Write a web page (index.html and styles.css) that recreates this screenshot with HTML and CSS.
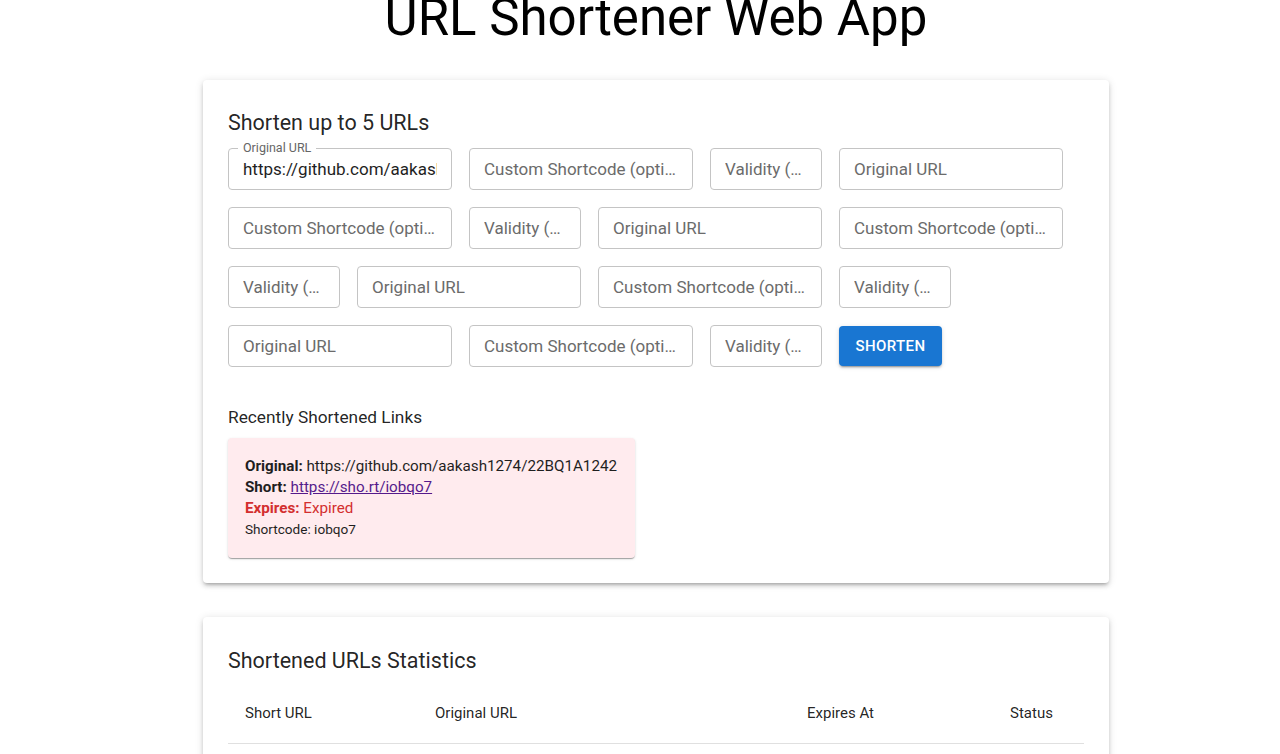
FILE: index.html
```html
<!DOCTYPE html>
<html lang="en">
<head>
<meta charset="utf-8">
<title>URL Shortener Web App</title>
<link rel="stylesheet" href="styles.css">
</head>
<body>
<div class="container">
  <h1 class="title">URL Shortener Web App</h1>

  <section class="paper form-paper">
    <h2 class="section-title">Shorten up to 5 URLs</h2>
    <div class="fields">
      <div class="field wide filled">
        <span class="float-label">Original URL</span>
        <div class="value">https://github.com/aakash1274/22BQ1A1242</div>
      </div>
      <div class="field wide"><span class="ph">Custom Shortcode (optional)</span></div>
      <div class="field narrow"><span class="ph">Validity (minutes)</span></div>
      <div class="field wide"><span class="ph">Original URL</span></div>

      <div class="field wide"><span class="ph">Custom Shortcode (optional)</span></div>
      <div class="field narrow"><span class="ph">Validity (minutes)</span></div>
      <div class="field wide"><span class="ph">Original URL</span></div>
      <div class="field wide"><span class="ph">Custom Shortcode (optional)</span></div>

      <div class="field narrow"><span class="ph">Validity (minutes)</span></div>
      <div class="field wide"><span class="ph">Original URL</span></div>
      <div class="field wide"><span class="ph">Custom Shortcode (optional)</span></div>
      <div class="field narrow"><span class="ph">Validity (minutes)</span></div>

      <div class="field wide"><span class="ph">Original URL</span></div>
      <div class="field wide"><span class="ph">Custom Shortcode (optional)</span></div>
      <div class="field narrow"><span class="ph">Validity (minutes)</span></div>
      <button class="btn" type="button">SHORTEN</button>
    </div>

    <h3 class="sub-title">Recently Shortened Links</h3>
    <div class="link-card">
      <div class="line"><b>Original:</b> https://github.com/aakash1274/22BQ1A1242</div>
      <div class="line"><b>Short:</b> <a class="short-link" href="#">https://sho.rt/iobqo7</a></div>
      <div class="line expired"><b>Expires:</b> Expired</div>
      <div class="line small">Shortcode: iobqo7</div>
    </div>
  </section>

  <section class="paper stats-paper">
    <h2 class="section-title stats-title">Shortened URLs Statistics</h2>
    <table class="stats">
      <thead>
        <tr>
          <th class="c1">Short URL</th>
          <th class="c2">Original URL</th>
          <th class="c3">Expires At</th>
          <th class="c4">Status</th>
        </tr>
      </thead>
    </table>
  </section>
</div>
</body>
</html>
```

FILE: styles.css
```css
* { box-sizing: border-box; }

html, body {
  margin: 0;
  padding: 0;
  background: #ffffff;
}

body {
  font-family: Roboto, "Liberation Sans", Arial, sans-serif;
  color: rgba(0, 0, 0, 0.87);
  overflow: hidden;
  padding-left: 32px;
}

.container {
  width: 906px;
  margin: 0 auto;
}

.title {
  margin: -10px 0 34px;
  font-size: 51px;
  font-weight: 400;
  line-height: 56px;
  text-align: center;
  color: #000;
  white-space: nowrap;
}

.paper {
  background: #fff;
  border-radius: 4px;
  box-shadow: 0 3px 3px -2px rgba(0,0,0,0.2), 0 3px 4px 0 rgba(0,0,0,0.14), 0 1px 8px 0 rgba(0,0,0,0.12);
  padding: 25px;
}

.section-title {
  margin: 0 0 8px;
  padding-top: 1px;
  font-size: 21.5px;
  font-weight: 400;
  line-height: 34px;
}

.stats-title {
  padding-top: 2px;
  margin-bottom: 6px;
}

.fields {
  display: flex;
  flex-wrap: wrap;
  gap: 17px;
}

.field {
  position: relative;
  height: 42px;
  border: 1px solid #c4c4c4;
  border-radius: 4px;
  display: flex;
  align-items: center;
  padding: 0 14px;
  font-size: 17px;
  min-width: 0;
}

.field.wide { width: 224px; }
.field.narrow { width: 112px; }

.ph {
  color: #6b6b6b;
  white-space: nowrap;
  overflow: hidden;
  text-overflow: ellipsis;
}

.value {
  white-space: nowrap;
  overflow: hidden;
  color: #1f1f1f;
}

.float-label {
  position: absolute;
  top: -8px;
  left: 9px;
  padding: 0 5px;
  background: #fff;
  font-size: 12.5px;
  line-height: 14px;
  color: #666;
}

.btn {
  height: 40px;
  width: 103px;
  margin-top: 1px;
  border: none;
  border-radius: 4px;
  background: #1976d2;
  color: #fff;
  font-family: inherit;
  font-size: 15px;
  font-weight: 500;
  letter-spacing: 0.4px;
  box-shadow: 0 3px 1px -2px rgba(0,0,0,0.2), 0 2px 2px 0 rgba(0,0,0,0.14), 0 1px 5px 0 rgba(0,0,0,0.12);
  padding: 0;
}

.sub-title {
  margin: 37px 0 8px;
  font-size: 17.3px;
  font-weight: 400;
  line-height: 26px;
}

.link-card {
  width: 407px;
  background: #ffebee;
  border-radius: 4px;
  box-shadow: 0 2px 1px -1px rgba(0,0,0,0.2), 0 1px 1px 0 rgba(0,0,0,0.14), 0 1px 3px 0 rgba(0,0,0,0.12);
  padding: 18px 17px 18px;
}

.line {
  font-size: 15.2px;
  line-height: 21px;
  color: #1f1f1f;
}

.line b { font-weight: 700; }

.short-link { color: #551a8b; }

.line.expired { color: #d32f2f; }

.line.small {
  font-size: 13.6px;
  line-height: 21px;
}

.stats-paper {
  margin-top: 34px;
  padding-bottom: 40px;
}

.stats {
  width: 100%;
  border-collapse: collapse;
  margin: 0;
}

.stats th {
  text-align: left;
  font-weight: 400;
  font-size: 15px;
  line-height: 24px;
  padding: 17px 17px 18px;
  border-bottom: 1px solid #e0e0e0;
}

.stats .c1 { width: 190px; }
.stats .c2 { width: 372px; }
.stats .c3 { width: 203px; }
```
